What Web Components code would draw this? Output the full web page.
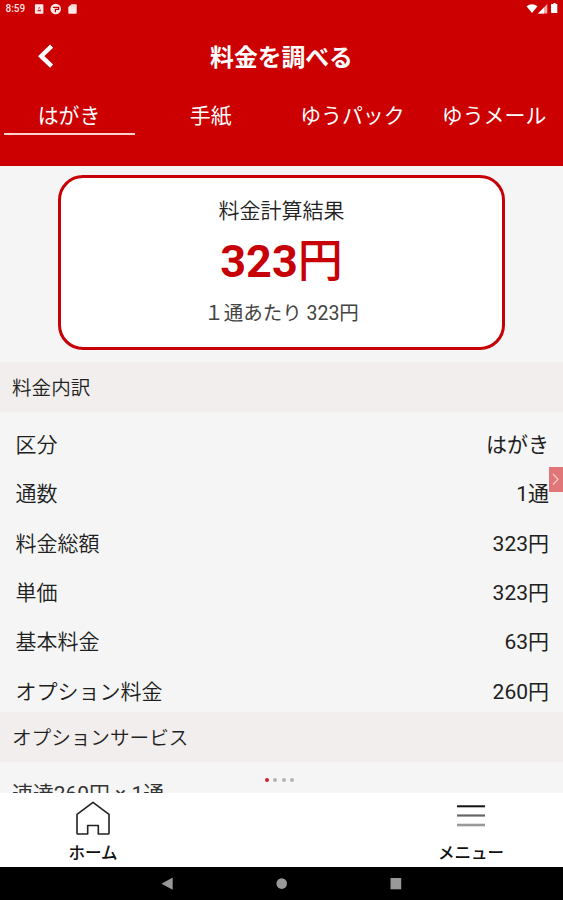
<!DOCTYPE html>
<html lang="ja">
<head>
<meta charset="utf-8">
<title>料金を調べる</title>
<style>
html,body{margin:0;height:900px;overflow:hidden;background:#f5f5f5}
body{font-family:Roboto,"Noto Sans CJK JP",sans-serif;color:#1c1c1c}
</style>
</head>
<body>
<postage-app></postage-app>
<script>
const define = (name, html) => customElements.define(name, class extends HTMLElement {
  constructor() {
    super();
    const t = document.createElement('template');
    t.innerHTML = html;
    this.attachShadow({mode: 'open'}).append(t.content.cloneNode(true));
  }
});

define('status-bar', `<style>
:host{display:flex;justify-content:space-between;height:18px;padding:0 4px 0 5.5px;box-sizing:border-box;color:#ffe3e3}
div{display:flex;align-items:center}
span{font:500 10px/20px Roboto,sans-serif;width:28px}
svg{display:block}
</style>
<div><span>8:59</span>
<svg width="44" height="18" viewBox="0 0 44 18"><path fill="#ffe8e8" fill-rule="evenodd" d="M1.6 4.3h7q.8 0 .8.7v8q0 .7-.8.7h-7q-.7 0-.7-.7V5q0-.7.7-.7zM3.4 11.2h3.6L5.2 6.5z"/><circle cx="5.2" cy="9.3" r="1" fill="#ffe8e8"/><circle cx="21.7" cy="9" r="5.3" fill="#ffe8e8"/><path d="M19 7.3h5.6v2h-3.2v3" fill="none" stroke="#c00" stroke-width="1.2"/><path fill="#ffe8e8" d="M37.5 4.3H42q.7 0 .7.7v8q0 .8-.8.8h-6.8q-.8 0-.8-.8V7z"/><path d="M37.7 5.5v1.6M39.4 5.5v1.6M41 5.5v1.6" stroke="#f0a0a0" stroke-width=".6"/></svg></div>
<div><svg width="34" height="18" viewBox="0 0 34 18"><path fill="#fff" d="M1.5 6.3Q7 2 12.5 6.3L7 13z"/><path fill="#f6aaaa" d="M22.3 4v9.5H13z"/><path fill="#fff" d="M19 7.5v6h-6z"/><path fill="#fff" d="M27 4h1.5V3h2.2v1h1.6v9H27q-1 0-1-.8V4.8q0-.8 1-.8z"/></svg></div>`);

define('title-bar', `<style>
:host{display:grid;grid-template-columns:60px 1fr 60px;align-items:center;height:77px}
svg{display:block;margin-left:36px;margin-top:-1px}
h1{margin:0;text-align:center;font:700 23.8px/36px Roboto,"Noto Sans CJK JP",sans-serif;color:#fff;padding-top:2px}
</style><svg width="20" height="26" viewBox="0 0 20 26"><path d="M15.6 3.2L5.2 13.2l10.4 10" fill="none" stroke="#fff" stroke-width="4.4"/></svg><h1><slot></slot></h1>`);

define('tab-item', `<style>
:host{display:block;text-align:center;height:40px;box-sizing:border-box;font-size:20.9px;line-height:43px;color:#fff;border-bottom:2px solid transparent;white-space:nowrap;text-indent:-1px}
:host([active]){border-color:#ffd0d0}
</style><slot></slot>`);

define('tab-bar', `<style>
:host{display:grid;grid-template-columns:repeat(4,131px);column-gap:10.7px;padding-left:4px}
</style><slot></slot>`);

define('result-card', `<style>
:host{display:flex;flex-direction:column;align-items:center;box-sizing:border-box;width:447px;height:175px;margin:9px 0 0 58px;border:3px solid #c70008;border-radius:25px;background:#fff;padding-top:17px}
.t{font-size:21px;line-height:32px;color:#222;font-weight:350}
.p{font-size:45px;line-height:64px;font-weight:700;color:#c70008;display:flex;margin-top:3px}
.p ::slotted([slot=unit]){font-weight:500}
.s{font-size:19.5px;line-height:30px;color:#444;margin-top:5px}
</style><div class="t"><slot name="title"></slot></div><div class="p"><slot name="price"></slot><slot name="unit"></slot></div><div class="s"><slot name="note"></slot></div>`);

define('section-head', `<style>
:host{display:block;height:50px;line-height:53px;padding-left:12px;font-size:19.6px;font-weight:350;background:#f2eeed;color:#222}
</style><slot></slot>`);

define('fee-row', `<style>
:host{display:flex;justify-content:space-between;align-items:center;height:49.35px;padding:0 14px 0 15.5px;font-size:21px;line-height:32px;color:#202020}
::slotted([slot=k]){font-weight:350}
</style><slot name="k"></slot><slot name="v"></slot>`);

define('nav-item', `<style>
:host{display:flex;flex-direction:column;align-items:center;font-size:16.5px;font-weight:500;line-height:26px;color:#111}
::slotted(svg){display:block;height:36px;margin-top:8px;margin-bottom:4px}
</style><slot name="icon"></slot><slot></slot>`);

define('android-nav', `<style>
:host{display:flex;height:33px;background:#000}
svg{display:block}
</style><svg width="563" height="33" viewBox="0 0 563 33" fill="#999"><path d="M161.5 16.7L172.7 10.5v12.3z"/><circle cx="281.7" cy="16.6" r="5.3"/><path d="M390.5 11h10.7v11.3h-10.7z"/></svg>`);

define('page-dots', `<style>
:host{position:absolute;left:265px;top:778px;display:flex;gap:4.3px}
i{width:4px;height:4px;border-radius:50%;background:#b4b4b4}
i:first-of-type{background:#d0202a}
</style><i></i><i></i><i></i><i></i>`);

define('side-handle', `<style>
:host{position:absolute;right:0;top:467px;width:14px;height:25px;background:#e17678}
svg{display:block}
</style><svg width="14" height="25" viewBox="0 0 14 25"><path d="M4 7l5 5.3-5 5.2" fill="none" stroke="#f8d0d0" stroke-width="1.2"/></svg>`);

define('postage-app', `<style>
:host{display:flex;flex-direction:column;position:relative;width:563px;height:900px;overflow:hidden}
header{height:165.5px;background:#c00;flex:none}
main{height:627.5px;overflow:hidden;flex:none;background:#f5f5f5}
.rows{padding-top:8.4px;height:291.6px;box-sizing:content-box}
result-card{margin-bottom:12.5px}
.opt{padding:16px 0 0 12px;font-size:20.9px;line-height:32px;color:#333}
nav{height:74px;flex:none;background:#fff;display:flex;justify-content:space-between;padding:0 59px 0 60px;box-sizing:border-box}
nav nav-item{width:66px}
</style>
<header><status-bar></status-bar><title-bar>料金を調べる</title-bar>
<tab-bar><tab-item active>はがき</tab-item><tab-item>手紙</tab-item><tab-item>ゆうパック</tab-item><tab-item>ゆうメール</tab-item></tab-bar></header>
<main>
<result-card><span slot="title">料金計算結果</span><span slot="price">323</span><span slot="unit">円</span><span slot="note">１通あたり 323円</span></result-card>
<section-head>料金内訳</section-head>
<div class="rows">
<fee-row><span slot="k">区分</span><span slot="v">はがき</span></fee-row>
<fee-row><span slot="k">通数</span><span slot="v">1通</span></fee-row>
<fee-row><span slot="k">料金総額</span><span slot="v">323円</span></fee-row>
<fee-row><span slot="k">単価</span><span slot="v">323円</span></fee-row>
<fee-row><span slot="k">基本料金</span><span slot="v">63円</span></fee-row>
<fee-row><span slot="k">オプション料金</span><span slot="v">260円</span></fee-row>
</div>
<section-head>オプションサービス</section-head>
<div class="opt">速達260円 × 1通</div>
</main>
<nav>
<nav-item><svg slot="icon" width="36" height="36" viewBox="0 0 36 36"><path d="M2 13.8L18 1.8l16 12V32.7q0 .8-.8.8H23.3V25H12.7v8.5H2.8q-.8 0-.8-.8z" transform="translate(0 -.5)" fill="none" stroke="#222" stroke-width="1.6" stroke-linejoin="round"/></svg>ホーム</nav-item>
<nav-item><svg slot="icon" width="28" height="36" viewBox="0 0 28 36"><path d="M0 5.3h28" stroke="#111" stroke-width="2"/><path d="M0 14.5h28" stroke="#666" stroke-width="2.2"/><path d="M0 24h28" stroke="#999" stroke-width="2.6"/></svg>メニュー</nav-item>
</nav>
<android-nav></android-nav>
<page-dots></page-dots><side-handle></side-handle>`);
</script>
</body>
</html>
